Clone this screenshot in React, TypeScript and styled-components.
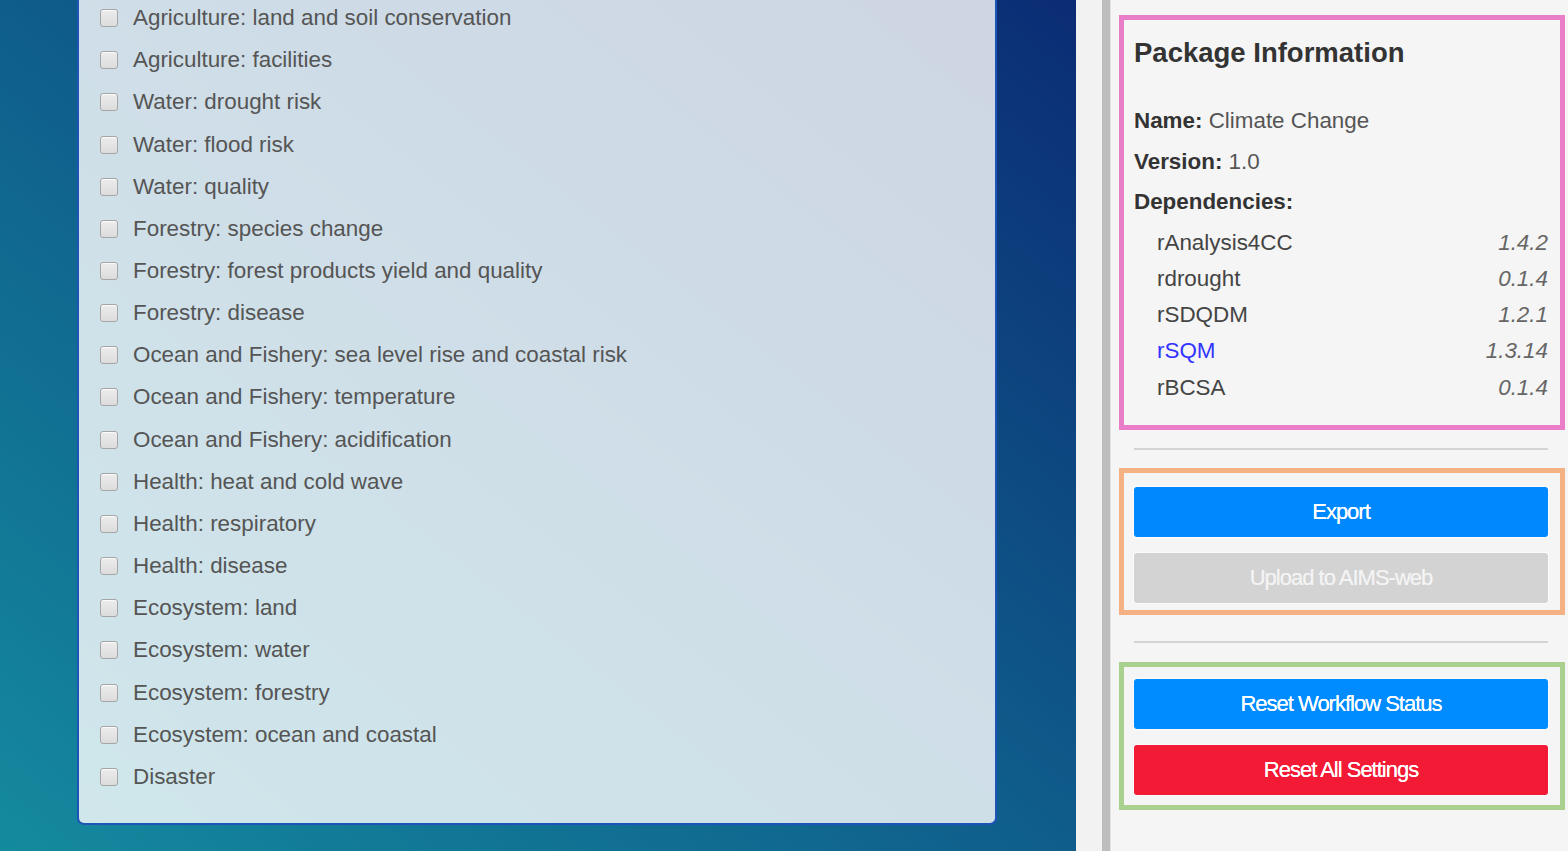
import React from "react";
import styled, { createGlobalStyle } from "styled-components";

const Global = createGlobalStyle`
  html, body { margin: 0; padding: 0; }
  body { font-family: "Liberation Sans", Arial, sans-serif; overflow: hidden; }
`;

const Page = styled.div`
  display: flex;
  width: 1568px;
  height: 851px;
  overflow: hidden;
`;

const Main = styled.div`
  width: 1076px;
  flex: none;
  height: 100%;
  background: linear-gradient(to top right, #148a9e 0%, #0f5d8b 50%, #0b2c74 100%);
  padding-left: 77px;
  box-sizing: border-box;
`;

const ListPanel = styled.div`
  width: 920px;
  box-sizing: border-box;
  margin-top: -3px;
  padding: 0 0 25px 21px;
  background: rgba(255, 255, 255, 0.8);
  border: 2px solid #1d54b8;
  border-top: none;
  border-radius: 0 0 7px 7px;
`;

const Row = styled.label`
  display: flex;
  align-items: center;
  height: 42.17px;
  font-size: 22.4px;
  color: #555;
`;

const Box = styled.span`
  width: 16px;
  height: 16px;
  border: 1px solid #a5a5a5;
  border-radius: 3px;
  background: linear-gradient(#ececec, #dcdcdc);
  box-shadow: inset 0 1px 1px rgba(255,255,255,0.8);
  margin-right: 15px;
  flex: none;
`;

const Gutter = styled.div`
  width: 26px;
  flex: none;
  background: #f2f2f2;
`;

const Splitter = styled.div`
  width: 8px;
  flex: none;
  background: #bdbdbd;
`;

const Side = styled.div`
  flex: 1;
  background: #f5f5f5;
  border-left: 1px solid #e2e2e2;
  padding: 15px 3px 0 8px;
  box-sizing: border-box;
`;

const Section = styled.div<{ $color: string; $pt: number; $pb: number }>`
  border: 5px solid ${(p) => p.$color};
  padding: ${(p) => p.$pt}px 12px ${(p) => p.$pb}px 10px;
  display: flex;
  flex-direction: column;
`;

const Heading = styled.h3`
  margin: 18px 0 33px;
  font-size: 27.5px;
  line-height: 30px;
  font-weight: bold;
  color: #333;
`;

const InfoRow = styled.div`
  height: 40.5px;
  line-height: 40.5px;
  font-size: 22.4px;
  color: #555;
  b { color: #333; }
`;

const DepList = styled.div`
  margin-top: 2px;
  padding-left: 23px;
  display: flex;
  flex-direction: column;
`;

const Dep = styled.div<{ $link?: boolean }>`
  display: flex;
  justify-content: space-between;
  align-items: center;
  height: 36.25px;
  font-size: 22.4px;
  color: ${(p) => (p.$link ? "#3333ff" : "#444")};
`;

const Ver = styled.span`
  font-style: italic;
  color: #666;
`;

const Rule = styled.div<{ $mt: number; $mb: number }>`
  height: 2px;
  background: #d4d4d4;
  margin: ${(p) => p.$mt}px 17px ${(p) => p.$mb}px 15px;
`;

const Button = styled.button<{ $bg: string; $fg?: string }>`
  height: 50px;
  border: none;
  border-radius: 3px;
  background: ${(p) => p.$bg};
  color: ${(p) => p.$fg || "#fff"};
  font-family: "Liberation Sans", Arial, sans-serif;
  font-size: 22px;
  letter-spacing: -1px;
  padding: 0;
  text-shadow: 0 0 0.6px ${(p) => p.$fg || "#fff"};
  box-shadow: 0 0 0 1px rgba(255,255,255,0.6);
  & + & { margin-top: 16px; }
`;

const items = [
  "Agriculture: land and soil conservation",
  "Agriculture: facilities",
  "Water: drought risk",
  "Water: flood risk",
  "Water: quality",
  "Forestry: species change",
  "Forestry: forest products yield and quality",
  "Forestry: disease",
  "Ocean and Fishery: sea level rise and coastal risk",
  "Ocean and Fishery: temperature",
  "Ocean and Fishery: acidification",
  "Health: heat and cold wave",
  "Health: respiratory",
  "Health: disease",
  "Ecosystem: land",
  "Ecosystem: water",
  "Ecosystem: forestry",
  "Ecosystem: ocean and coastal",
  "Disaster",
];

const deps: [string, string, boolean?][] = [
  ["rAnalysis4CC", "1.4.2"],
  ["rdrought", "0.1.4"],
  ["rSDQDM", "1.2.1"],
  ["rSQM", "1.3.14", true],
  ["rBCSA", "0.1.4"],
];

export default function App() {
  return (
    <Page>
      <Global />
      <Main>
        <ListPanel>
          {items.map((t) => (
            <Row key={t}>
              <Box />
              {t}
            </Row>
          ))}
        </ListPanel>
      </Main>
      <Gutter />
      <Splitter />
      <Side>
        <Section $color="#ea7dc8" $pt={0} $pb={19}>
          <Heading>Package Information</Heading>
          <InfoRow>
            <b>Name:</b> Climate Change
          </InfoRow>
          <InfoRow>
            <b>Version:</b> 1.0
          </InfoRow>
          <InfoRow>
            <b>Dependencies:</b>
          </InfoRow>
          <DepList>
            {deps.map(([n, v, l]) => (
              <Dep key={n} $link={l}>
                <span>{n}</span>
                <Ver>{v}</Ver>
              </Dep>
            ))}
          </DepList>
        </Section>
        <Rule $mt={18} $mb={18} />
        <Section $color="#f4b183" $pt={14} $pb={7}>
          <Button $bg="#0088ff">Export</Button>
          <Button $bg="#d3d3d3" $fg="#f3f3f3">Upload to AIMS-web</Button>
        </Section>
        <Rule $mt={26} $mb={19} />
        <Section $color="#a9d08e" $pt={12} $pb={10}>
          <Button $bg="#008bff">Reset Workflow Status</Button>
          <Button $bg="#f31a35">Reset All Settings</Button>
        </Section>
      </Side>
    </Page>
  );
}
